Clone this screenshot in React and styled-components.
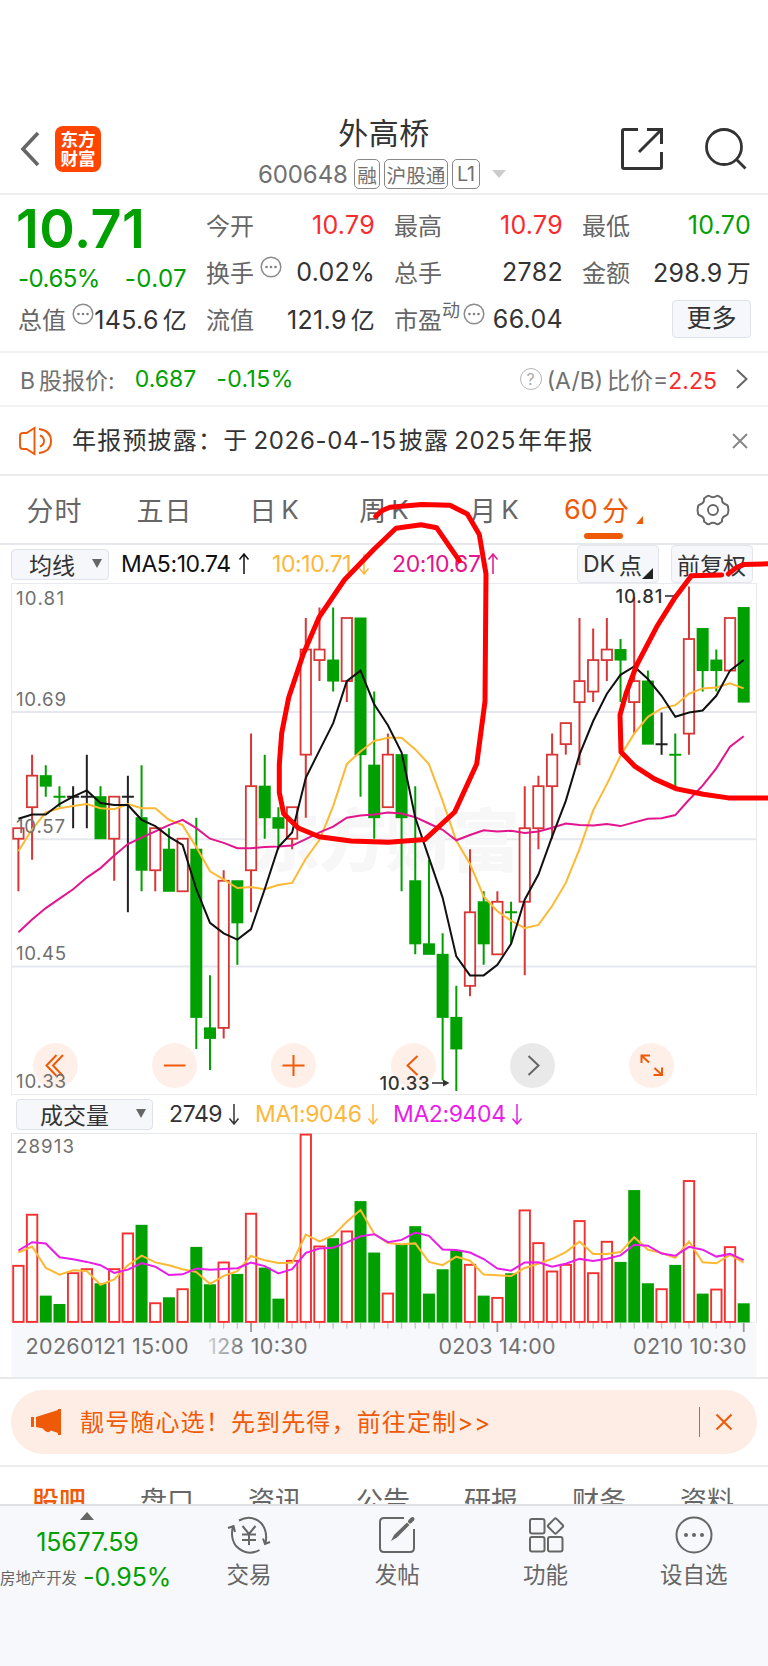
import React from "react";
import styled, { createGlobalStyle } from "styled-components";

const GREEN = "#00a000";
const RED = "#fa2a2d";
const ORANGE = "#ef5a08";
const FONT = `Inter, "Noto Sans CJK SC", sans-serif`;

// [color, body top, body bottom, high, low], prices x100
const candles = [
    ["r", 1058, 1057, 1058, 1052], ["r", 1063, 1060, 1065, 1055], ["g", 1063, 1062, 1064, 1061],
    ["g", 1061, 1061, 1062, 1060], ["k", 1061, 1061, 1062, 1058], ["k", 1061, 1061, 1065, 1058],
    ["g", 1061, 1057, 1062, 1057], ["r", 1061, 1057, 1061, 1053], ["k", 1061, 1061, 1063, 1050],
    ["g", 1059, 1054, 1064, 1052], ["r", 1058, 1054, 1058, 1052], ["g", 1056, 1052, 1058, 1052],
    ["r", 1057, 1052, 1057, 1052], ["g", 1056, 1040, 1059, 1037], ["g", 1039, 1038, 1044, 1035],
    ["r", 1053, 1039, 1054, 1038], ["g", 1053, 1049, 1053, 1045], ["r", 1062, 1054, 1067, 1050],
    ["g", 1062, 1059, 1065, 1057], ["g", 1059, 1058, 1060, 1056], ["r", 1060, 1057, 1060, 1056],
    ["r", 1075, 1065, 1078, 1059], ["r", 1075, 1074, 1079, 1072], ["g", 1074, 1072, 1079, 1071],
    ["r", 1078, 1072, 1078, 1070], ["g", 1078, 1065, 1078, 1061], ["g", 1064, 1059, 1071, 1057],
    ["r", 1065, 1060, 1067, 1060], ["g", 1065, 1059, 1065, 1052], ["g", 1053, 1047, 1062, 1046],
    ["g", 1047, 1046, 1055, 1046], ["g", 1046, 1040, 1048, 1034], ["g", 1040, 1037, 1043, 1033],
    ["r", 1050, 1043, 1056, 1042], ["g", 1051, 1047, 1052, 1045], ["r", 1051, 1046, 1052, 1046],
    ["g", 1050, 1050, 1051, 1047], ["r", 1058, 1051, 1062, 1044], ["r", 1062, 1058, 1063, 1056],
    ["r", 1065, 1062, 1067, 1057], ["r", 1068, 1066, 1068, 1065], ["r", 1072, 1070, 1078, 1064],
    ["r", 1074, 1071, 1077, 1070], ["r", 1075, 1074, 1078, 1072], ["g", 1075, 1074, 1076, 1070],
    ["r", 1072, 1070, 1080, 1067], ["g", 1072, 1066, 1073, 1066], ["k", 1066, 1066, 1069, 1065],
    ["g", 1065, 1065, 1067, 1062], ["r", 1076, 1067, 1081, 1065], ["g", 1077, 1073, 1077, 1071],
    ["g", 1074, 1073, 1075, 1071], ["r", 1078, 1073, 1078, 1073], ["g", 1079, 1070, 1079, 1070],
];

const VOL_MAX = 563;
const volumes = [
    170, 323, 79, 54, 148, 160, 116, 160, 267, 291, 58, 74, 100, 225, 113, 180, 144, 326,
    163, 70, 185, 563, 228, 251, 273, 362, 208, 87, 233, 287, 85, 158, 215, 173, 79, 74,
    146, 336, 238, 153, 173, 304, 148, 242, 180, 395, 116, 100, 171, 424, 85, 99, 226, 56,
];
const volumeColors = "rrggrrgrrgrgrggrgrggrrrgrggrgggggrgrgrrrrrrrgggrgrgrrg";

// averages before the first full window
const ma5Seed = [1058.9, 1059.3, 1059.3, 1060.3];
const ma10Seed = [1055.8, 1057.9, 1059.5, 1059.9, 1060.1, 1060.3, 1059.9, 1059.8, 1060.3];
const ma20Seed = [
    1048.1, 1049.3, 1050.4, 1051.3, 1052.2, 1053.3, 1054.2, 1055.4, 1056.5, 1057.1,
    1057.7, 1058.3, 1058.8, 1058, 1057, 1056.6, 1056.1, 1056.1, 1056.2,
];
const volMa5Seed = [208, 226, 162, 142];
const volMa10Seed = [214, 239, 235, 194, 188, 180, 170, 147, 157];

const closes = candles.map(([color, top, bottom]) => (color === "r" ? top : bottom));

function average(list, size, seed) {
    return list.map((_, i) => {
        if (i < seed.length) return seed[i];
        return list.slice(i - size + 1, i + 1).reduce((a, b) => a + b, 0) / size;
    });
}

const xAt = (i) => 18.4 + i * 13.685;
const yPrice = (p) => 129.6 + (1069 - p) * 10.51;
const yVolume = (v) => 189 - (v / VOL_MAX) * 188;
const toPoints = (list, y) => list.map((v, i) => `${xAt(i).toFixed(1)},${y(v).toFixed(1)}`).join(" ");

const inks = { r: "#d93636", g: GREEN, k: "#222" };

function Candle({ data, index }) {
    const [color, top, bottom, high, low] = data;
    const x = xAt(index);
    const ink = inks[color];
    const y1 = yPrice(top);
    const y2 = yPrice(bottom);

    if (top === bottom) {
        return (
            <g stroke={ink} strokeWidth="2">
                <path d={`M${x} ${yPrice(high)}V${yPrice(low)}M${x - 6} ${y1}h12`} />
            </g>
        );
    }
    return (
        <g>
            <path d={`M${x} ${yPrice(high)}V${y1}M${x} ${y2}V${yPrice(low)}`} stroke={ink} strokeWidth="2" />
            {color === "r"
                ? <rect x={x - 5.2} y={y1} width="10.4" height={y2 - y1} fill="#fff" stroke={ink} strokeWidth="1.8" />
                : <rect x={x - 6} y={y1 - 0.5} width="12" height={y2 - y1 + 1} fill={ink} />}
        </g>
    );
}

function PriceChart() {
    return (
        <Svg width="768" height="512" viewBox="0 0 768 512">
            <rect x="11.5" y="0.5" width="745" height="511" fill="#fff" stroke="#e9ebf0" />
            <path d="M12 129H756M12 256.3H756M12 383.6H756" stroke="#e5e8ef" strokeWidth="2" />
            <Watermark x="252" y="283" textLength="268">东方财富</Watermark>
            {candles.map((c, i) => <Candle key={i} data={c} index={i} />)}
            <g fill="none" strokeWidth="2">
                <polyline points={toPoints(average(closes, 10, ma10Seed), yPrice)} stroke="#fdb934" />
                <polyline points={toPoints(average(closes, 20, ma20Seed), yPrice)} stroke="#e2158d" />
                <polyline points={toPoints(average(closes, 5, ma5Seed), yPrice)} stroke="#111" />
            </g>
            <ScaleText x="16" y="21.5" textLength="48">10.81</ScaleText>
            <ScaleText x="16" y="122.5" textLength="50">10.69</ScaleText>
            <ScaleText x="16" y="250" textLength="49">10.57</ScaleText>
            <ScaleText x="16" y="377" textLength="50">10.45</ScaleText>
            <MarkText x="615.5" y="19.5" textLength="47">10.81</MarkText>
            <path d="M665 13H677" stroke="#333" strokeWidth="1.6" />
        </Svg>
    );
}

function VolumeChart() {
    return (
        <Svg width="768" height="244" viewBox="0 0 768 244">
            <rect x="11.5" y="189.5" width="745" height="55" fill="#f7f8fb" />
            <path d="M11.5 189.5V0.5H756.5V189.5" fill="none" stroke="#e5e7ec" />
            <path d="M12 189.5H756" stroke="#eceef2" />
            {volumes.map((v, i) => {
                const x = xAt(i);
                const y = yVolume(v);
                return volumeColors[i] === "r"
                    ? <rect key={i} x={x - 5.2} y={y + 0.6} width="10.4" height={188.3 - y} fill="#fff" stroke="#f62f2f" strokeWidth="1.9" />
                    : <rect key={i} x={x - 6} y={y} width="12" height={189.5 - y} fill={GREEN} />;
            })}
            <g fill="none" strokeWidth="2">
                <polyline points={toPoints(average(volumes, 5, volMa5Seed), yVolume)} stroke="#fdb934" />
                <polyline points={toPoints(average(volumes, 10, volMa10Seed), yVolume)} stroke="#e81ee8" />
            </g>
            {volumes.map((_, i) => {
                if (i < 14) return null;
                const long = (i + 1) % 18 === 0;
                return <path key={i} d={`M${xAt(i)} 190V${long ? 199 : 195.5}`} stroke={long ? "#999" : "#c4c4c4"} strokeWidth={long ? 1.8 : 1.3} />;
            })}
            <ScaleText x="16" y="19.5" textLength="58">28913</ScaleText>
            <defs>
                <linearGradient id="fade" x1="200" x2="245" gradientUnits="userSpaceOnUse">
                    <stop offset="0" stopColor="#707070" stopOpacity="0.1" />
                    <stop offset="1" stopColor="#707070" />
                </linearGradient>
            </defs>
            <TimeText x="25.5" y="221" textLength="163">20260121 15:00</TimeText>
            <TimeText x="208" y="221" textLength="99.5" fill="url(#fade)">128 10:30</TimeText>
            <TimeText x="438.5" y="221" textLength="117">0203 14:00</TimeText>
            <TimeText x="633" y="221" textLength="113.5">0210 10:30</TimeText>
        </Svg>
    );
}

function Arrow({ down }) {
    return (
        <ArrowSvg width="12" height="22" viewBox="0 0 12 22" fill="none" stroke="currentColor" strokeWidth="1.5">
            <path d={down ? "M6 1V21M1.5 15.5L6 21L10.5 15.5" : "M6 21V1M1.5 6.5L6 1L10.5 6.5"} />
        </ArrowSvg>
    );
}

function Dots() {
    return (
        <DotsSvg width="22" height="22" viewBox="0 0 22 22">
            <circle cx="11" cy="11" r="9.8" fill="none" stroke="#8c8c8c" strokeWidth="1.5" />
            <g fill="#808080">
                <circle cx="6.5" cy="11" r="1.3" />
                <circle cx="11" cy="11" r="1.3" />
                <circle cx="15.5" cy="11" r="1.3" />
            </g>
        </DotsSvg>
    );
}

const controls = [
    { name: "first", d: "M23.5 12L13.5 22.5L23.5 33M30 12L20 22.5L30 33" },
    { name: "minus", d: "M12 22.5H33.5" },
    { name: "plus", d: "M11.5 22.5H33.5M22.5 12V33" },
    { name: "prev", d: "M26.5 13L16.5 22.5L26.5 32" },
    { name: "next", d: "M18.5 13L28.5 22.5L18.5 32", gray: true },
    { name: "full", d: "M12.5 20V12.5H21M12.5 12.5L20 19.5M33 24.5V32H24.5M33 32L25.5 25" },
];

const news = ["股吧", "盘口", "资讯", "公告", "研报", "财务", "资料"];

export default function App() {
    return (
        <Page>
            <GlobalStyle />
            <Header>
                <Brand>
                    <svg width="20" height="36" viewBox="0 0 20 36" fill="none" stroke="#666" strokeWidth="3.6">
                        <path d="M18 2L3 18L18 34" />
                    </svg>
                    <Logo>东方<br />财富</Logo>
                </Brand>
                <Title>
                    <h1>外高桥</h1>
                    <Code>
                        <span>600648</span>
                        <Tag $width={26}>融</Tag>
                        <Tag $width={64}>沪股通</Tag>
                        <Tag $width={28}>L1</Tag>
                        <Caret />
                    </Code>
                </Title>
                <Actions>
                    <svg width="44" height="44" viewBox="0 0 44 44" fill="none" stroke="#333" strokeWidth="3">
                        <path d="M18 2.5H4Q2.5 2.5 2.5 4V40Q2.5 41.5 4 41.5H40Q41.5 41.5 41.5 40V25M27 2.5H41.5V17M41 3L19 25" />
                    </svg>
                    <svg width="44" height="44" viewBox="0 0 44 44" fill="none" stroke="#333" strokeWidth="2.8">
                        <circle cx="20" cy="20" r="17.5" />
                        <path d="M32 32L41.5 41.5" />
                    </svg>
                </Actions>
            </Header>

            <Quotes>
                <Main>
                    <Price>10.71</Price>
                    <Change><span>-0.65%</span><span>-0.07</span></Change>
                </Main>
                <Cell><Label>今开</Label><Value $color={RED}>10.79</Value></Cell>
                <Cell><Label>最高</Label><Value $color={RED}>10.79</Value></Cell>
                <Cell><Label>最低</Label><Value $color={GREEN}>10.70</Value></Cell>
                <Cell><Label>换手<Dots /></Label><Value>0.02%</Value></Cell>
                <Cell><Label>总手</Label><Value>2782</Value></Cell>
                <Cell><Label>金额</Label><Value>298.9<i>万</i></Value></Cell>
                <Cell><Label>总值<Dots /></Label><Value>145.6<i>亿</i></Value></Cell>
                <Cell><Label>流值</Label><Value>121.9<i>亿</i></Value></Cell>
                <Cell><Label>市盈<sup>动</sup><Dots /></Label><Value>66.04</Value></Cell>
                <More>更多</More>
            </Quotes>

            <BShare>
                <span>B<i>股报价:</i></span>
                <Down>0.687</Down>
                <Down>-0.15%</Down>
                <Ratio>
                    <Help>?</Help>
                    <span>(A/B)<i>比价</i>=<b>2.25</b></span>
                    <svg width="14" height="22" viewBox="0 0 14 22" fill="none" stroke="#666" strokeWidth="2">
                        <path d="M2 2L11.5 11L2 20" />
                    </svg>
                </Ratio>
            </BShare>

            <Notice>
                <svg width="34" height="30" viewBox="0 0 34 30" fill="none" stroke={ORANGE} strokeWidth="1.9">
                    <path d="M15.5 2V28L7.5 23H4Q1 23 1 20V10Q1 7 4 7H7.5ZM21 9.5Q25 11 25 15Q25 19 21 20.5M20 3Q32 4.5 32 15Q32 25.5 20 27" />
                </svg>
                <p>年报预披露：于<i>2026-04-15</i>披露<i>2025</i>年年报</p>
                <svg width="18" height="18" viewBox="0 0 18 18" stroke="#888" strokeWidth="2">
                    <path d="M2 2L16 16M16 2L2 16" />
                </svg>
            </Notice>

            <Periods>
                <Period>分时</Period>
                <Period>五日</Period>
                <Period>日<i>K</i></Period>
                <Period>周<i>K</i></Period>
                <Period>月<i>K</i></Period>
                <Period $active><em>60</em>分</Period>
                <Settings>
                    <svg width="34" height="32" viewBox="0 0 34 32" fill="none" stroke="#666" strokeWidth="1.9">
                        <path d="M10 3Q12 1 13.5 2Q17 4.5 20.5 2Q22 1 24 3L26 4.5Q25.5 9 30 10.5Q32 11 32 13L32.5 16L32 19Q32 21 30 21.5Q25.5 23 26 27.5L24 29Q22 31 20.5 30Q17 27.5 13.5 30Q12 31 10 29L8 27.5Q8.5 23 4 21.5Q2 21 2 19L1.5 16L2 13Q2 11 4 10.5Q8.5 9 8 4.5Z" strokeLinejoin="round" />
                        <circle cx="17" cy="16" r="5" />
                    </svg>
                </Settings>
            </Periods>

            <Indicators>
                <Select $width={98}>均线<Triangle /></Select>
                <Legend $color="#111" $left={12} $width={129}>MA5:10.74<Arrow /></Legend>
                <Legend $color="#fdb73b" $left={22} $width={98}>10:10.71<Arrow down /></Legend>
                <Legend $color="#e2158d" $left={22} $width={107}>20:10.67<Arrow /></Legend>
                <Toggle $corner>DK<i>点</i></Toggle>
                <Toggle>前复权</Toggle>
            </Indicators>

            <ChartArea>
                <PriceChart />
                <Controls>
                    {controls.map(c => (
                        <Control key={c.name} $gray={c.gray}>
                            <svg width="45" height="45" viewBox="0 0 45 45" fill="none" stroke={c.gray ? "#666" : ORANGE} strokeWidth="2">
                                <path d={c.d} />
                            </svg>
                        </Control>
                    ))}
                </Controls>
                <LowLabels width="768" height="512" viewBox="0 0 768 512">
                    <ScaleText x="16" y="504.5" textLength="50">10.33</ScaleText>
                    <MarkText x="379.5" y="506.5" textLength="50">10.33</MarkText>
                    <path d="M432 500H448" stroke="#333" strokeWidth="1.6" />
                    <path d="M443 496.5L449.5 500L443 503.5Z" fill="#333" />
                </LowLabels>
            </ChartArea>

            <VolumeBar>
                <Select $width={137}>成交量<Triangle /></Select>
                <Legend $color="#333" $left={16} $width={71}>2749<Arrow down /></Legend>
                <Legend $color="#fdb73b" $left={15} $width={124}>MA1:9046<Arrow down /></Legend>
                <Legend $color="#e81ee8" $left={14} $width={130}>MA2:9404<Arrow down /></Legend>
            </VolumeBar>
            <VolumeChart />

            <PromoWrap>
                <Promo>
                    <svg width="31" height="28" viewBox="0 0 31 28" fill={ORANGE}>
                        <path d="M0 9H3V19H0ZM5 9L27 2V1H30V27H27V25L20 22.5Q17 26 13 22L12 20.5L5 19Z" />
                    </svg>
                    <p>靓号随心选！先到先得，前往定制&gt;&gt;</p>
                    <Divider />
                    <svg width="18" height="18" viewBox="0 0 18 18" stroke={ORANGE} strokeWidth="2">
                        <path d="M1.5 1.5L16.5 16.5M16.5 1.5L1.5 16.5" />
                    </svg>
                </Promo>
            </PromoWrap>

            <NewsTabs>
                {news.map((n, i) => <NewsTab key={n} $active={i === 0}>{n}</NewsTab>)}
            </NewsTabs>

            <BottomBar>
                <Sector>
                    <svg width="14" height="8" viewBox="0 0 14 8" fill="#666"><path d="M0 8L7 0L14 8Z" /></svg>
                    <strong>15677.59</strong>
                    <div><small>房地产开发</small><span>-0.95%</span></div>
                </Sector>
                <NavItem>
                    <svg width="44" height="40" viewBox="0 0 44 40" fill="none" stroke="#666" strokeWidth="2">
                        <path d="M12 5.5Q24 -1 34 8Q41 16 38.5 28M32.5 35Q20 42 9 31Q3 23 6 11M1 13L6.5 11L8 17M36 23.5L38 29L43 27M15.5 11L22 19L28.5 11M22 19V30M15 19.5H29M15 25H29" />
                    </svg>
                    交易
                </NavItem>
                <NavItem>
                    <svg width="40" height="40" viewBox="0 0 40 40" fill="none" stroke="#666" strokeWidth="2">
                        <path d="M27 3H7Q3 3 3 7V33Q3 37 7 37H33Q37 37 37 33V14" />
                        <path d="M14 26L17 20L30 7.5L32.5 10L20 22.5Z" fill="#666" stroke="none" />
                        <path d="M33 6.5L35.5 4" strokeWidth="4" strokeLinecap="round" />
                    </svg>
                    发帖
                </NavItem>
                <NavItem>
                    <svg width="40" height="40" viewBox="0 0 40 40" fill="none" stroke="#666" strokeWidth="2">
                        <rect x="4" y="4" width="14.5" height="14.5" rx="2" />
                        <rect x="4" y="22" width="14.5" height="14.5" rx="2" />
                        <rect x="22" y="22" width="14.5" height="14.5" rx="2" />
                        <rect x="23.7" y="5.2" width="11.6" height="11.6" rx="1.5" transform="rotate(45 29.5 11)" />
                    </svg>
                    功能
                </NavItem>
                <NavItem>
                    <svg width="40" height="40" viewBox="0 0 40 40" fill="#666">
                        <circle cx="20" cy="20" r="17.5" fill="none" stroke="#666" strokeWidth="2" />
                        <circle cx="12" cy="20" r="2" />
                        <circle cx="20" cy="20" r="2" />
                        <circle cx="28" cy="20" r="2" />
                    </svg>
                    设自选
                </NavItem>
            </BottomBar>

            <Drawing width="768" height="1666" viewBox="0 0 768 1666">
                <path d="M375.7 516.4L381.7 510.8L390 507.3L421.7 504.5L450 505.3L467.3 514L479.3 534.6L486 574L485 701.4L476.7 764L454.7 812L425 839.4L388.3 842.2L351 841L319.3 836.7L298.3 828L283.7 813.7L279.3 792.4V764.7L281.7 733L288.7 697.5L303.3 654L319.3 616.8L344.3 580L374 549.2L396 528.2L421 524.7L436.7 527.8L459.3 560.7" />
                <path d="M772 797.9H728.3L703.3 794.3L676.7 788.9L654.3 778.9L635 766.4L621 752.1L620 715L626 693.6L636.7 665L656.7 626.8L674.3 598.6L690.7 576.8V575.8L721.7 575" />
                <path d="M728.3 573.9L736 567.9L743.3 564.6L772 563.6" />
            </Drawing>
        </Page>
    )
}

const GlobalStyle = createGlobalStyle`
    * {
        box-sizing: border-box;
    }

    body {
        margin: 0;
        background: #fff;
    }

    i, em {
        font-style: normal;
    }

    h1, p {
        margin: 0;
    }
`

const Page = styled.div`
    position: relative;
    width: 768px;
    height: 1666px;
    overflow: hidden;
    background: #fff;
    font-family: ${FONT};
    color: #333;
`

const Header = styled.header`
    display: grid;
    grid-template-columns: 200px 1fr 200px;
    height: 195px;
    padding-top: 115px;
    border-bottom: 2px solid #eee;
`

const Brand = styled.div`
    display: flex;
    align-items: flex-start;
    padding: 11px 0 0 20px;

    svg {
        margin: 5px 15px 0 0;
    }
`

const Logo = styled.div`
    width: 46px;
    height: 46px;
    padding-top: 4px;
    border-radius: 8px;
    background: #ff4500;
    color: #fff;
    font-size: 17.5px;
    font-weight: 700;
    line-height: 19px;
    text-align: center;
`

const Title = styled.div`
    h1 {
        height: 40px;
        font-size: 30px;
        font-weight: 400;
        line-height: 36px;
        text-align: center;
        letter-spacing: 0.5px;
    }
`

const Code = styled.div`
    display: flex;
    align-items: center;
    height: 38px;
    margin-left: 58px;
    color: #707070;
    font-size: 24px;

    > span:first-child {
        width: 96px;
        letter-spacing: -0.1px;
    }
`

const Tag = styled.span`
    display: flex;
    justify-content: center;
    align-items: center;
    flex: none;
    width: ${props => props.$width}px;
    height: 30px;
    margin-right: 4px;
    border: 1.5px solid #888;
    border-radius: 5px;
    font-size: 19.7px;
    white-space: nowrap;
`

const Caret = styled.span`
    margin-left: 8px;
    border: 7px solid transparent;
    border-top: 8px solid #ccc;
    border-bottom: 0;
`

const Actions = styled.div`
    display: flex;
    align-items: flex-start;
    gap: 40px;
    padding: 12px 0 0 52px;
`

const Quotes = styled.section`
    display: grid;
    grid-template-columns: repeat(4, 169px);
    grid-template-rows: 47px 47px 47px;
    column-gap: 19px;
    height: 158px;
    padding: 6px 0 0 18px;
    border-bottom: 2px solid #f2f2f2;
`

const Main = styled.div`
    grid-row: 1 / 3;
    color: ${GREEN};
`

const Price = styled.div`
    height: 58px;
    margin-left: -2px;
    font-size: 54px;
    font-weight: 600;
    line-height: 56px;
    letter-spacing: 0.5px;
`

const Change = styled.div`
    display: flex;
    justify-content: space-between;
    font-size: 24px;
    line-height: 40px;
    letter-spacing: -0.5px;

    span + span {
        letter-spacing: 0.4px;
    }
`

const Cell = styled.div`
    display: flex;
    justify-content: space-between;
    align-items: center;
    white-space: nowrap;
`

const Label = styled.span`
    display: flex;
    align-items: center;
    color: #666;
    font-size: 24px;

    sup {
        align-self: flex-start;
        margin-top: -4px;
        font-size: 18px;
        line-height: 28px;
    }
`

const DotsSvg = styled.svg`
    margin: 0 -20px 9px 6px;

    sup + & {
        margin-left: 3px;
    }
`

const Value = styled.span`
    color: ${props => props.$color || "#333"};
    font-size: 25px;
    letter-spacing: 0.3px;

    i {
        margin-left: 4px;
        font-size: 24px;
    }
`

const More = styled.button`
    justify-self: end;
    align-self: center;
    width: 79px;
    height: 38px;
    padding: 0 0 2px;
    border: 1px solid #dfe2e9;
    border-radius: 4px;
    background: #f6f7fb;
    color: #333;
    font: 25px/30px ${FONT};
`

const BShare = styled.section`
    display: flex;
    align-items: center;
    height: 54px;
    padding: 0 19px 1px 20px;
    border-bottom: 2px solid #f2f2f2;
    color: #707070;
    font-size: 23px;

    i {
        margin-left: 4px;
        font-size: 23px;
    }
`

const Down = styled.span`
    margin-left: 20px;
    color: ${GREEN};

    & + & {
        letter-spacing: 0.4px;
    }
`

const Ratio = styled.div`
    display: flex;
    align-items: center;
    margin-left: auto;

    b {
        color: ${RED};
        font-weight: 400;
    }

    svg {
        margin-left: 18px;
    }
`

const Help = styled.span`
    display: flex;
    justify-content: center;
    align-items: center;
    width: 22px;
    height: 22px;
    margin-right: 5px;
    border: 1.5px solid #b5b5b5;
    border-radius: 50%;
    color: #aaa;
    font-size: 16px;
`

const Notice = styled.section`
    display: flex;
    align-items: center;
    height: 69px;
    padding: 0 19px;
    border-bottom: 2px solid #ececec;

    p {
        flex: 1;
        margin: -4px 0 0 19px;
        font-size: 24px;
        letter-spacing: 1.2px;
    }

    i {
        margin: 0 2px 0 5px;
        letter-spacing: 0.7px;
    }
`

const Periods = styled.nav`
    display: flex;
    height: 69px;
    border-bottom: 2px solid #e6e8ec;
`

const Period = styled.span`
    position: relative;
    display: flex;
    justify-content: center;
    align-items: center;
    width: 110px;
    padding-right: ${props => props.$active ? 16 : 1}px;
    color: ${props => props.$active ? ORANGE : "#666"};
    font-size: 27px;
    letter-spacing: 1px;

    i {
        margin-left: 4px;
        font-size: 26px;
    }

    em {
        margin-right: 4px;
        letter-spacing: 0;
    }

    ${props => props.$active && `
        &::after {
            content: "";
            position: absolute;
            left: 34px;
            bottom: 4px;
            width: 39px;
            height: 6px;
            border-radius: 3px;
            background: ${ORANGE};
        }

        &::before {
            content: "";
            position: absolute;
            right: 17px;
            bottom: 19px;
            border-left: 7px solid transparent;
            border-bottom: 8px solid ${ORANGE};
        }
    `}
`

const Settings = styled.span`
    display: flex;
    align-items: center;
    padding-left: 36px;
`

const Indicators = styled.section`
    display: flex;
    align-items: center;
    height: 38px;
    padding-left: 11px;
`

const VolumeBar = styled(Indicators)`
    padding-left: 16px;
`

const Select = styled.div`
    display: flex;
    align-items: center;
    justify-content: space-between;
    width: ${props => props.$width}px;
    height: 31px;
    padding: 0 6px 1px ${props => props.$width > 100 ? 23 : 17}px;
    border: 1px solid #dfe2e9;
    border-radius: 4px;
    background: #f6f7fb;
    font-size: 23px;
`

const Triangle = styled.span`
    border: 5px solid transparent;
    border-top: 9px solid #666;
    border-bottom: 0;
`

const Legend = styled.div`
    display: flex;
    align-items: center;
    justify-content: space-between;
    width: ${props => props.$width}px;
    margin-left: ${props => props.$left}px;
    color: ${props => props.$color};
    font-size: 23px;
    letter-spacing: -0.4px;
`

const ArrowSvg = styled.svg`
    flex: none;
`

const Toggle = styled.div`
    position: relative;
    display: flex;
    align-items: center;
    width: 82px;
    height: 38px;
    margin-left: ${props => props.$corner ? 78 : 12}px;
    padding-left: 5px;
    border: 1px solid #e4e6ec;
    border-radius: 4px;
    background: #f6f7fb;
    font-size: 23px;
    white-space: nowrap;

    i {
        margin-left: 4px;
    }

    ${props => props.$corner && `
        &::after {
            content: "";
            position: absolute;
            right: 5px;
            bottom: 3px;
            border-left: 11px solid transparent;
            border-bottom: 11px solid #222;
        }
    `}
`

const Svg = styled.svg`
    display: block;
    flex: none;
`

const ChartArea = styled.section`
    position: relative;
    height: 512px;
`

const Controls = styled.div`
    position: absolute;
    left: 33px;
    top: 460px;
    display: flex;
    gap: 74.2px;
`

const Control = styled.button`
    width: 45px;
    height: 45px;
    padding: 0;
    border: 0;
    border-radius: 50%;
    background: ${props => props.$gray ? "rgba(229, 229, 229, 0.85)" : "rgba(254, 237, 229, 0.85)"};
`

const LowLabels = styled.svg`
    position: absolute;
    left: 0;
    top: 0;
`

const ScaleText = styled.text`
    fill: #707070;
    font: 18.7px Inter, sans-serif;
`

const MarkText = styled.text`
    fill: #333;
    font: 500 18.5px Inter, sans-serif;
`

const TimeText = styled.text`
    fill: ${props => props.fill || "#707070"};
    font: 21.5px Inter, sans-serif;
`

const Watermark = styled.text`
    fill: #f7f7f7;
    font: 900 68px "Noto Sans CJK SC", sans-serif;
`

const PromoWrap = styled.section`
    height: 90px;
    padding: 11px 11px 0;
    border-top: 2px solid #e8e9ee;
    border-bottom: 2px solid #ededed;
`

const Promo = styled.div`
    display: flex;
    align-items: center;
    height: 64px;
    padding: 0 24px 0 20px;
    border-radius: 32px;
    background: #feede5;
    color: ${ORANGE};
    font-size: 24px;
    letter-spacing: 1.15px;

    p {
        flex: 1;
        margin: -3px 0 0 18px;
    }
`

const Divider = styled.span`
    width: 1.5px;
    height: 30px;
    margin-right: 15px;
    background: ${ORANGE};
`

const NewsTabs = styled.nav`
    display: flex;
    height: 37px;
    padding-left: 5px;
    overflow: hidden;
`

const NewsTab = styled.span`
    width: 108px;
    padding-top: 16px;
    color: ${props => props.$active ? ORANGE : "#666"};
    font-size: 27px;
    font-weight: ${props => props.$active ? 500 : 400};
    line-height: 38px;
    text-align: center;
`

const BottomBar = styled.footer`
    display: flex;
    height: 162px;
    border-top: 2px solid #dfe0e3;
    background: #f6f8fb;
`

const Sector = styled.div`
    display: flex;
    flex-direction: column;
    align-items: center;
    width: 175px;
    padding-top: 6px;
    color: ${GREEN};

    strong {
        height: 43px;
        font-size: 25px;
        font-weight: 400;
        line-height: 44px;
        letter-spacing: -0.2px;
    }

    div {
        display: flex;
        align-items: center;
        align-self: flex-start;
        white-space: nowrap;
    }

    small {
        width: 83px;
        color: #666;
        font-size: 15.4px;
    }

    span {
        font-size: 25px;
        line-height: 28px;
        letter-spacing: -0.1px;
    }
`

const NavItem = styled.div`
    display: flex;
    flex-direction: column;
    align-items: center;
    width: 148.4px;
    padding-top: 9px;
    color: #666;
    font-size: 22.5px;
    line-height: 40px;
`

const Drawing = styled.svg`
    position: absolute;
    left: 0;
    top: 0;
    fill: none;
    stroke: #fe0000;
    stroke-width: 5;
    stroke-linecap: round;
    stroke-linejoin: round;
    pointer-events: none;
`
